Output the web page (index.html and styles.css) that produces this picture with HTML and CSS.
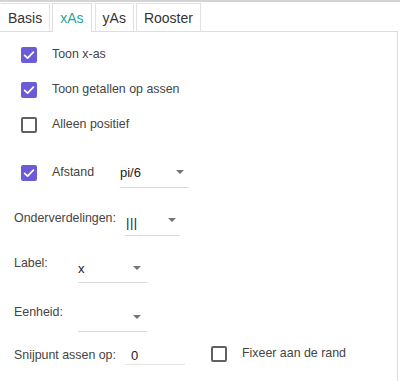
FILE: index.html
```html
<!DOCTYPE html>
<html>
<head>
<meta charset="utf-8">
<link rel="stylesheet" href="styles.css">
</head>
<body>
<div class="app">
  <div class="tabs">
    <div class="tab">Basis</div>
    <div class="tab active">xAs</div>
    <div class="tab">yAs</div>
    <div class="tab">Rooster</div>
  </div>
  <div class="panel">
    <div class="row check-row">
      <span class="cb checked"><svg width="16" height="16" viewBox="0 0 16 16"><polyline points="3.6,8.3 6.6,11.2 12.4,5.2" fill="none" stroke="#fff" stroke-width="1.7" stroke-linecap="round" stroke-linejoin="round"/></svg></span>
      <span class="cb-label">Toon x-as</span>
    </div>
    <div class="row check-row">
      <span class="cb checked"><svg width="16" height="16" viewBox="0 0 16 16"><polyline points="3.6,8.3 6.6,11.2 12.4,5.2" fill="none" stroke="#fff" stroke-width="1.7" stroke-linecap="round" stroke-linejoin="round"/></svg></span>
      <span class="cb-label">Toon getallen op assen</span>
    </div>
    <div class="row check-row">
      <span class="cb"></span>
      <span class="cb-label">Alleen positief</span>
    </div>

    <div class="row afstand-row">
      <span class="cb checked"><svg width="16" height="16" viewBox="0 0 16 16"><polyline points="3.6,8.3 6.6,11.2 12.4,5.2" fill="none" stroke="#fff" stroke-width="1.7" stroke-linecap="round" stroke-linejoin="round"/></svg></span>
      <span class="cb-label afstand-label">Afstand</span>
      <div class="select w69"><span class="val">pi/6</span><span class="arrow"></span></div>
    </div>

    <div class="row onder-row">
      <span class="lbl w111 lift">Onderverdelingen:</span>
      <div class="select w55 pr4"><span class="val bars">|||</span><span class="arrow"></span></div>
    </div>

    <div class="row top-row label-row">
      <span class="lbl w64 down">Label:</span>
      <div class="select w69 pr6"><span class="val">x</span><span class="arrow"></span></div>
    </div>

    <div class="row top-row eenheid-row">
      <span class="lbl w64 down">Eenheid:</span>
      <div class="select w69 pr6"><span class="val"></span><span class="arrow"></span></div>
    </div>

    <div class="row snij-row">
      <span class="lbl w111">Snijpunt assen op:</span>
      <div class="input"><span class="val">0</span></div>
      <span class="cb fix-cb"></span>
      <span class="cb-label">Fixeer aan de rand</span>
    </div>
  </div>
</div>
</body>
</html>
```

FILE: styles.css
```css
html, body {
  margin: 0;
  padding: 0;
  background: #fff;
}
body {
  font-family: "Liberation Sans", Arial, sans-serif;
  color: #444;
  width: 400px;
  height: 381px;
  overflow: hidden;
}
.app {
  border-top: 2px solid #d4d4d4;
  height: 379px;
  display: flex;
  flex-direction: column;
}
.tabs {
  display: flex;
  align-items: flex-start;
  padding-top: 1px;
}
.tab {
  box-sizing: border-box;
  height: 28px;
  padding: 0 7px;
  border: 1px solid #e2e2e2;
  border-bottom: none;
  margin-right: 2px;
  font-size: 14px;
  color: #333;
  display: flex;
  align-items: center;
}
.tab:first-child {
  border-left-color: transparent;
}
.tab.active {
  color: #26a69a;
  height: 29px;
  margin-bottom: -1px;
  background: #fff;
  position: relative;
  z-index: 1;
  border-color: #ddd;
  margin-right: 3px;
}
.panel {
  box-sizing: border-box;
  width: 398px;
  flex: 1;
  border-top: 1px solid #ddd;
  border-right: 1px solid #ddd;
  padding: 5px 0 0 14px;
  font-size: 12.4px;
}
.row {
  display: flex;
  align-items: center;
}
.check-row {
  height: 35px;
  padding-left: 7px;
}
.cb {
  box-sizing: border-box;
  width: 16px;
  height: 16px;
  border: 2px solid #616161;
  border-radius: 2px;
  flex: none;
  display: block;
}
.cb.checked {
  border: none;
  background: #6b5bd6;
}
.cb svg {
  display: block;
}
.cb-label {
  margin-left: 15px;
  color: #444;
  line-height: 15px;
}
.afstand-row {
  margin-top: 15px;
  padding-left: 7px;
}
.afstand-label {
  width: 68px;
  flex: none;
}
.select {
  box-sizing: border-box;
  height: 31px;
  border-bottom: 1px solid #dadada;
  display: flex;
  align-items: center;
  justify-content: space-between;
  padding-right: 5px;
  flex: none;
}
.w69 { width: 69px; }
.w55 { width: 55px; }
.w64 { width: 64px; }
.w111 { width: 111px; }
.pr4 { padding-right: 4px; }
.pr6 { padding-right: 6px; }
.val {
  font-size: 13px;
  color: #222;
}
.bars {
  padding-left: 1px;
  letter-spacing: 0.5px;
  position: relative;
  top: 2px;
}
.arrow {
  width: 0;
  height: 0;
  border-left: 4.5px solid transparent;
  border-right: 4.5px solid transparent;
  border-top: 4.5px solid #757575;
}
.lbl {
  flex: none;
  line-height: 15px;
  color: #444;
}
.lift {
  margin-bottom: 4px;
}
.onder-row {
  margin-top: 17px;
}
.top-row {
  align-items: flex-start;
}
.down {
  padding-top: 4px;
}
.label-row {
  margin-top: 16px;
}
.label-row .select .arrow,
.eenheid-row .select .arrow {
  margin-top: 1px;
}
.label-row .val {
  position: relative;
  top: 1px;
}
.eenheid-row {
  margin-top: 18px;
}
.snij-row {
  margin-top: 14px;
  height: 19px;
}
.input {
  box-sizing: border-box;
  width: 60px;
  height: 19px;
  border-bottom: 1px solid #e3e3e3;
  padding-left: 6px;
  display: flex;
  align-items: center;
  flex: none;
}
.fix-cb {
  margin-left: 26px;
  margin-top: -3px;
}
.snij-row .cb-label {
  margin-top: -5px;
}
```
